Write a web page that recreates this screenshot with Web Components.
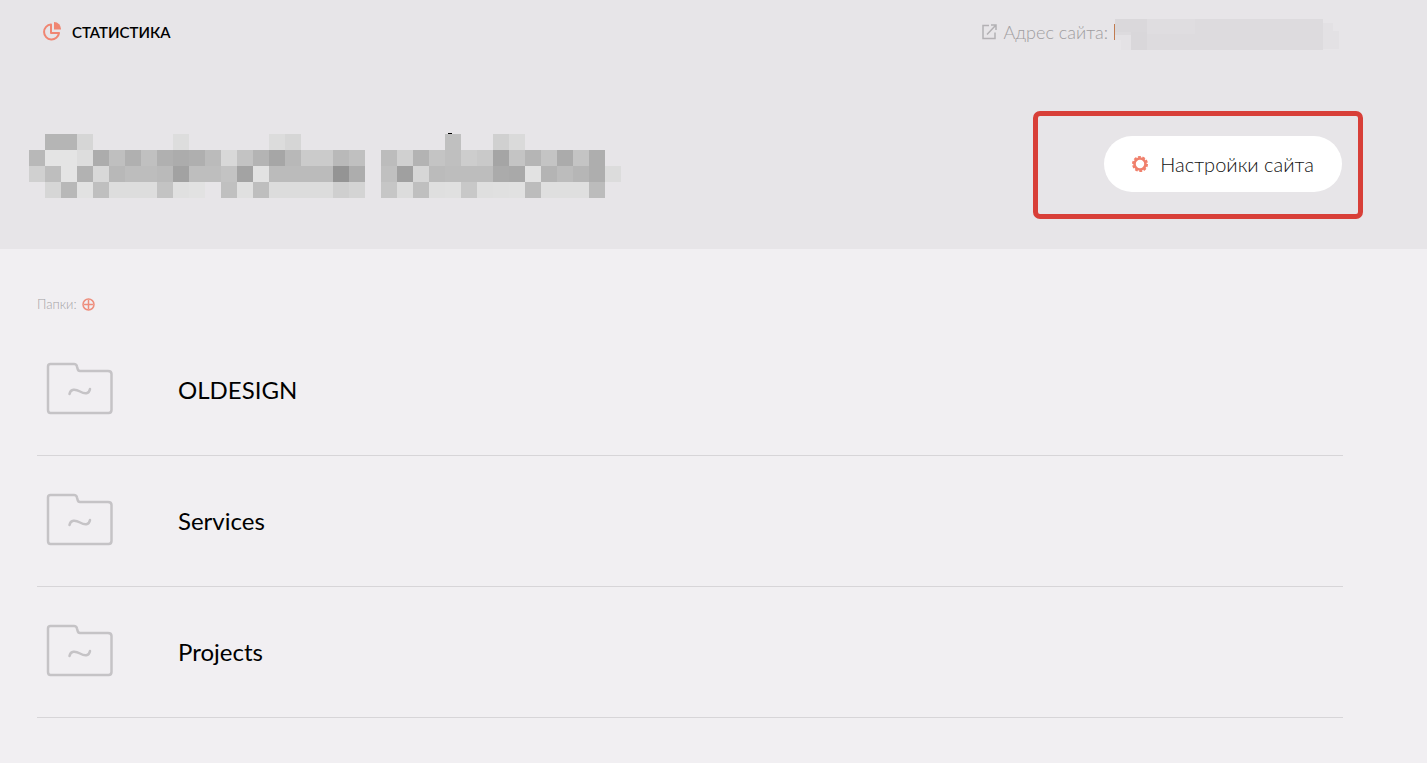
<!DOCTYPE html>
<html lang="ru">
<head>
<meta charset="utf-8">
<meta name="viewport" content="width=device-width, initial-scale=1">
<title>Настройки сайта</title>
<style>
    body {
        margin: 0;
        background: #f1eff2;
        color: #000;
        font-family: Lato, "Open Sans", sans-serif;
    }
</style>
</head>
<body>
<site-header>
    <stat-link slot="left">СТАТИСТИКА</stat-link>
    <site-address slot="right">Адрес сайта:</site-address>
    <pixel-title slot="title"></pixel-title>
    <settings-button slot="action">Настройки сайта</settings-button>
</site-header>
<folder-list>
    <span slot="label">Папки:</span>
    <folder-row>OLDESIGN</folder-row>
    <folder-row>Services</folder-row>
    <folder-row>Projects</folder-row>
</folder-list>

<script>
class SiteHeader extends HTMLElement {
    constructor() {
        super();
        const shadow = this.attachShadow({ mode: "open" });
        shadow.innerHTML = `
            <style>
                :host {
                    display: block;
                    background: #e7e5e8;
                    padding: 14px 85px 50px 29px;
                }

                .bar,
                .main {
                    display: flex;
                    align-items: center;
                    justify-content: space-between;
                }

                .bar {
                    height: 36px;
                    padding-left: 14px;
                    margin-bottom: 79px;
                }

                .main {
                    height: 70px;
                }
            </style>

            <header>
                <div class="bar">
                    <slot name="left"></slot>
                    <slot name="right"></slot>
                </div>
                <div class="main">
                    <slot name="title"></slot>
                    <slot name="action"></slot>
                </div>
            </header>
        `;
    }
}

class StatLink extends HTMLElement {
    constructor() {
        super();
        const shadow = this.attachShadow({ mode: "open" });
        shadow.innerHTML = `
            <style>
                :host {
                    display: block;
                }

                a {
                    display: flex;
                    align-items: center;
                    gap: 10px;
                    color: inherit;
                    text-decoration: none;
                    font-size: 15px;
                    font-weight: 600;
                    line-height: 20px;
                }
            </style>

            <a href="#stat">
                <svg width="19" height="20" viewBox="0 0 19 20" fill="none" aria-hidden="true">
                    <path d="M8 2.500a7.500 7.500 0 1 0 8 8.500H8z" stroke="#f08672" stroke-width="2" stroke-linejoin="round"/>
                    <path d="M11 0a7 7 0 0 1 7 7.500h-7z" fill="#f08672"/>
                </svg>
                <slot></slot>
            </a>
        `;
    }
}

class SiteAddress extends HTMLElement {
    constructor() {
        super();
        const shadow = this.attachShadow({ mode: "open" });
        shadow.innerHTML = `
            <style>
                :host {
                    display: flex;
                    align-items: center;
                    gap: 6px;
                    color: #9f9da0;
                    font-size: 18px;
                    font-weight: 300;
                    line-height: 24px;
                }
            </style>

            <svg width="15" height="16" viewBox="0 0 15 16" fill="none" stroke="#b3b1b4" stroke-width="1.5" aria-hidden="true">
                <path d="M7 1.500H1v13h12V8.500M5 10.500l8.500-9M9 1h5v5"/>
            </svg>
            <slot></slot>
            <svg width="228" height="40" viewBox="1 -6 228 40" shape-rendering="crispEdges" aria-hidden="true">
                <path d="M2 1h208v31H34V17H2z" fill="#dddbde"/>
                <path d="M34 1h48v15H34z" fill="#dfdde0"/>
                <path d="M2 17h16v15H8V22H2z" fill="#e4e2e5"/>
                <path d="M18 14h16v18H18z" fill="#d9d7da"/>
                <path d="M2 1h32v13H2z" fill="#dad8db"/>
                <path d="M210 5h10v8h6v18h-16z" fill="#e3e1e4"/>
                <path d="M1 6h1v16H1z" fill="#c17b50"/>
            </svg>
        `;
    }
}

// one pair of hex digits per cell, ".." is an empty cell
const PIXEL_ROWS = [
    "..b5b5d6..........dd..........dcd6..................c0....d0da............",
    "b8e4e4ddacbfb0c0b0acafbbd8c3b4a6b8cbcbb9c0..bcd0b3c4bfcdc9a5c4b5c4abc4ae..",
    "d0bee4b2d8b8bdbdbaa2bebec3a3e2bbbbbbbb94ad..c0a0d6bbbdbdbdaba9e2b4bcb6aedc",
    "..d6b8e2bfddddddc3e0e2..c0e0bedcdcdcdccfd4..c6dcbfdfe0c8dfe0e1bcdfdfdfbc..",
];

class PixelTitle extends HTMLElement {
    constructor() {
        super();
        this.attachShadow({ mode: "open" });
        this.size = 16;
    }

    connectedCallback() {
        this.shadowRoot.innerHTML = `
            <style>
                :host,
                svg {
                    display: block;
                }
            </style>

            <svg width="592" height="68" viewBox="0 0 592 68" shape-rendering="crispEdges" aria-hidden="true">
                ${this.renderCells()}
                <path d="M419 3h4v1h-4z" fill="#000"/>
            </svg>
        `;
    }

    renderCells() {
        return PIXEL_ROWS.map((row, y) =>
            row
                .match(/../g)
                .map((c, x) => (c === ".." ? "" : `<rect x="${x * this.size}" y="${y * this.size + 4}" width="${this.size}" height="${this.size}" fill="#${c + c + c}"/>`))
                .join("")
        ).join("");
    }
}

class SettingsButton extends HTMLElement {
    constructor() {
        super();
        const shadow = this.attachShadow({ mode: "open" });
        shadow.innerHTML = `
            <style>
                :host {
                    display: block;
                    position: relative;
                }

                button {
                    display: flex;
                    align-items: center;
                    gap: 12px;
                    height: 56px;
                    padding: 0 28px;
                    border: none;
                    border-radius: 28px;
                    background: #fff;
                    color: #111;
                    font: 300 20px/28px Lato, "Open Sans", sans-serif;
                    cursor: pointer;
                }

                .frame {
                    position: absolute;
                    inset: -25px -21px -27px -71px;
                    border: 5px solid #d83f38;
                    border-radius: 7px;
                    pointer-events: none;
                }
            </style>

            <button type="button">
                <svg width="16" height="16" viewBox="0 0 16 16" fill="none" stroke="#f0806c" aria-hidden="true">
                    <circle cx="8" cy="8" r="5.500" stroke-width="2.600"/>
                    <circle cx="8" cy="8" r="7" stroke-width="2" stroke-dasharray="2.800 1.598"/>
                </svg>
                <slot></slot>
            </button>
            <div class="frame"></div>
        `;
    }
}

class FolderList extends HTMLElement {
    constructor() {
        super();
        const shadow = this.attachShadow({ mode: "open" });
        shadow.innerHTML = `
            <style>
                :host {
                    display: block;
                    padding: 45px 84px 46px 37px;
                }

                .label {
                    display: flex;
                    align-items: center;
                    gap: 5px;
                    height: 20px;
                    margin-bottom: 11px;
                    color: #a5a3a6;
                    font-size: 13px;
                    font-weight: 300;
                }

                button {
                    display: flex;
                    padding: 0;
                    border: none;
                    background: none;
                    cursor: pointer;
                }
            </style>

            <div class="label">
                <slot name="label"></slot>
                <button type="button" aria-label="Добавить папку">
                    <svg width="13" height="13" viewBox="0 0 13 13" fill="none" stroke="#ee8d7c" stroke-width="1.500">
                        <circle cx="6.500" cy="6.500" r="5.500"/>
                        <path d="M6.500 2v9M2 6.500h9"/>
                    </svg>
                </button>
            </div>
            <slot></slot>
        `;
    }
}

class FolderRow extends HTMLElement {
    constructor() {
        super();
        const shadow = this.attachShadow({ mode: "open" });
        shadow.innerHTML = `
            <style>
                :host {
                    display: block;
                    border-bottom: 1px solid #d7d5d8;
                }

                a {
                    display: flex;
                    align-items: center;
                    gap: 64px;
                    height: 130px;
                    padding-left: 9px;
                    color: inherit;
                    text-decoration: none;
                    font-size: 24px;
                    line-height: 32px;
                }
            </style>

            <a href="#folder">
                <svg width="68" height="56" viewBox="0 0 68 56" fill="none" stroke="#c5c3c6" stroke-width="2.500" stroke-linecap="round" aria-hidden="true">
                    <path d="M4.500 2H28q2.500 0 3 2.500l.5 2Q32 9 34 9h28q3.500 0 3.500 3v36q0 3-3 3h-58Q2 51 2 48V4.500Q2 2 4.500 2z"/>
                    <path d="M23.500 32c1-5.500 6-5 10.500-2.500s9 3 10-2.500"/>
                </svg>
                <slot></slot>
            </a>
        `;
    }
}

customElements.define("site-header", SiteHeader);
customElements.define("stat-link", StatLink);
customElements.define("site-address", SiteAddress);
customElements.define("pixel-title", PixelTitle);
customElements.define("settings-button", SettingsButton);
customElements.define("folder-list", FolderList);
customElements.define("folder-row", FolderRow);
</script>
</body>
</html>
